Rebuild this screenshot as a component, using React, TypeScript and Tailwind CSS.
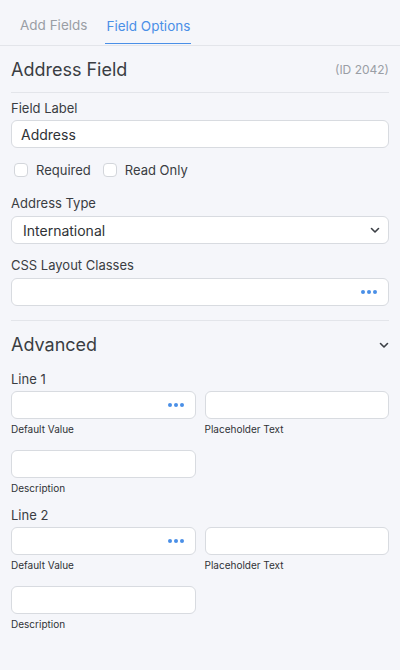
import React from "react";

/* ── small building blocks ── */
function Dots() {
    return (
        <span className="flex items-center gap-[2px]">
            <span className="w-[4px] h-[4px] rounded-full bg-[#4a8fe7]" />
            <span className="w-[4px] h-[4px] rounded-full bg-[#4a8fe7]" />
            <span className="w-[4px] h-[4px] rounded-full bg-[#4a8fe7]" />
        </span>
    );
}

function Chevron({ className }: { className?: string }) {
    return (
        <svg width="12" height="12" viewBox="0 0 12 12" className={className}>
            <path d="M2.5 4.5 L6 8 L9.5 4.5" fill="none" stroke="#3b3f45" strokeWidth="1.6" strokeLinecap="round" strokeLinejoin="round" />
        </svg>
    );
}

function Box({ children, className = "" }: { children?: React.ReactNode; className?: string }) {
    return (
        <div className={`h-[28px] bg-white border border-[#d8dbe0] rounded-[6px] flex items-center ${className}`}>
            {children}
        </div>
    );
}

function LineGroup({ title }: { title: string }) {
    return (
        <div>
            <div className="text-[13px] leading-[16px] text-[#3a3d42]">{title}</div>
            <div className="mt-[4px] grid grid-cols-2 gap-x-[9px]">
                <div>
                    <Box className="justify-end pr-[11px]">
                        <Dots />
                    </Box>
                    <div className="mt-[4px] text-[10px] leading-[12px] text-[#2f3236]">Default Value</div>
                </div>
                <div>
                    <Box />
                    <div className="mt-[4px] text-[10px] leading-[12px] text-[#2f3236]">Placeholder Text</div>
                </div>
                <div className="mt-[15px]">
                    <Box />
                    <div className="mt-[4px] text-[10px] leading-[12px] text-[#2f3236]">Description</div>
                </div>
            </div>
        </div>
    );
}

export default function App() {
    return (
        <div className="w-[400px] h-[670px] bg-[#f5f6fa] overflow-hidden" style={{ fontFamily: "Inter, 'Noto Sans', sans-serif" }}>
            {/* ── Tabs ── */}
            <div className="h-[46px] border-b border-[#e3e5ea] flex items-end px-[20px] gap-[18px] text-[13.5px] leading-[17px]">
                <div className="text-[#9a9ea5] pb-[11px]">Add Fields</div>
                <div className="text-[#4a8fe7] border-b-[1.5px] border-[#4a8fe7] pb-[8px] mb-[1.5px] px-[1px]">Field Options</div>
            </div>

            <div className="px-[11px]">
                {/* ── Header ── */}
                <div className="flex items-center justify-between pt-[13px] pb-[11px] border-b border-[#e3e5ea]">
                    <span className="text-[18px] leading-[22px] text-[#3a3d42]">Address Field</span>
                    <span className="text-[12px] text-[#9a9ea5]">(ID 2042)</span>
                </div>

                {/* ── Field Label ── */}
                <div className="mt-[7px] text-[13px] leading-[16px] text-[#3a3d42]">Field Label</div>
                <Box className="mt-[4px] px-[9px] text-[14px] text-[#2f3236]">Address</Box>

                {/* ── Checkboxes ── */}
                <div className="mt-[14px] flex items-center text-[13px] leading-[16px] text-[#3a3d42]">
                    <span className="ml-[3px] w-[14px] h-[14px] rounded-[4px] border border-[#d3d6db] bg-white" />
                    <span className="ml-[8px]">Required</span>
                    <span className="ml-[12px] w-[14px] h-[14px] rounded-[4px] border border-[#d3d6db] bg-white" />
                    <span className="ml-[8px]">Read Only</span>
                </div>

                {/* ── Address Type ── */}
                <div className="mt-[17px] text-[13px] leading-[16px] text-[#3a3d42]">Address Type</div>
                <Box className="mt-[5px] pl-[11px] pr-[7px] justify-between text-[14px] text-[#2f3236]">
                    <span>International</span>
                    <Chevron />
                </Box>

                {/* ── CSS Layout Classes ── */}
                <div className="mt-[13px] text-[13px] leading-[16px] text-[#3a3d42]">CSS Layout Classes</div>
                <Box className="mt-[5px] justify-end pr-[11px]">
                    <Dots />
                </Box>

                {/* ── Advanced ── */}
                <div className="mt-[14px] border-t border-[#e3e5ea] pt-[13px] flex items-center justify-between">
                    <span className="text-[18px] leading-[22px] text-[#3a3d42]">Advanced</span>
                    <Chevron className="mr-[-1px]" />
                </div>

                <div className="mt-[15px]">
                    <LineGroup title="Line 1" />
                </div>
                <div className="mt-[13px]">
                    <LineGroup title="Line 2" />
                </div>
            </div>
        </div>
    );
}
